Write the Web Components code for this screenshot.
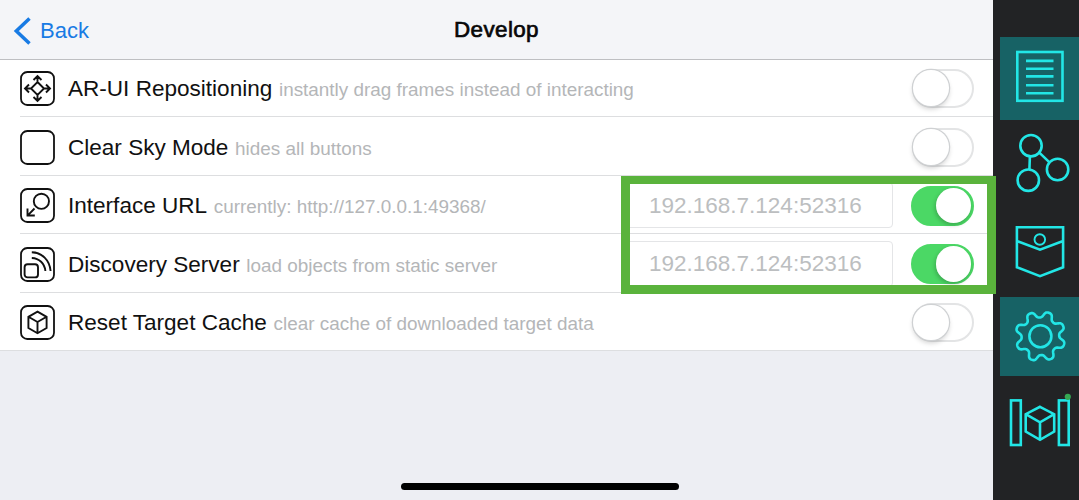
<!DOCTYPE html>
<html lang="en">
<head>
<meta charset="utf-8">
<title>Develop</title>
<style>
html, body { margin: 0; height: 100%; overflow: hidden; }
body { font-family: "Liberation Sans", Arial, sans-serif; }
</style>
</head>
<body>
<settings-app></settings-app>
<script>
const ICONS = {
  move: `<path d="M17.5 11L24 17.5L17.5 24L11 17.5ZM17.5 11V5M13.5 9L17.5 5L21.5 9M17.5 24V30M13.5 26L17.5 30L21.5 26M11 17.5H5M9 13.5L5 17.5L9 21.5M24 17.5H30M26 13.5L30 17.5L26 21.5"/>`,
  blank: ``,
  link: `<circle cx="21.4" cy="13.3" r="7.6"/><path d="M14.5 20.5L7.8 27.3M7.5 20.6V27.5H14.8"/>`,
  server: `<rect x="4.6" y="17.2" width="13.4" height="13.2" rx="3"/><path d="M11.8 5.3C22 5.6 29.6 13 30.6 24M11.8 11C19.3 11.3 24.6 16.5 25.4 24"/>`,
  cube: `<path d="M17.5 6.7L26.6 11.8V23L17.5 28.2L8.4 23V11.8ZM8.4 11.8L17.5 17L26.6 11.8M17.5 17V28.2"/>`
};

function gearPath(cx, cy) {
  const points = [];
  for (let i = 0; i < 240; i++) {
    const t = i / 240 * Math.PI * 2;
    const r = 21.9 + 3.1 * Math.tanh(1.5 * Math.cos(8 * (t + 0.435))) / Math.tanh(1.5);
    points.push((cx + r * Math.sin(t)).toFixed(2) + " " + (cy - r * Math.cos(t)).toFixed(2));
  }
  return "M" + points.join("L") + "Z";
}

const NAV = {
  page: ["1000 37 79 83", `<rect x="1017.3" y="52" width="45.2" height="48.8"/><path d="M1026 60.9H1053.5M1026 68.7H1053.5M1026 76.4H1053.5M1026 85.2H1053.5M1026 93.3H1053.5"/>`],
  nodes: ["1000 124 79 82", `<circle cx="1031" cy="145.7" r="10.7"/><circle cx="1028.3" cy="180.2" r="10.7"/><circle cx="1057.6" cy="169.5" r="10.7"/><path d="M1029.9 156.4L1029.4 169.5M1039.3 152.6L1049.5 162.4"/>`],
  pocket: ["1000 210 79 83", `<path d="M1016.9 227.2H1063.1V267.3L1040 276.2L1016.9 267.3ZM1016.9 241L1040 249.6L1063.1 241"/><circle cx="1039.8" cy="239.5" r="5.3" stroke-width="1.9"/>`],
  gear: ["1000 297 79 79", `<path d="${gearPath(1040.4, 336.3)}"/><circle cx="1040.4" cy="336.2" r="11"/>`],
  world: ["1000 380 79 83", `<rect x="1011" y="400.4" width="9.8" height="44.6"/><rect x="1058.9" y="400.4" width="9.8" height="44.6"/><path d="M1040 406.8L1054.2 414.2V431.5L1040 439.8L1025.7 431.5V414.2ZM1025.7 414.2L1040 422.3L1054.2 414.2M1040 422.3V439.8"/><circle cx="1067.8" cy="396.8" r="3.1" fill="#35a853" stroke="none"/>`]
};

class BaseElement extends HTMLElement {
  connectedCallback() {
    if (!this.shadowRoot) this.attachShadow({ mode: "open" }).innerHTML = this.render();
  }
}

customElements.define("row-icon", class extends BaseElement {
  render() {
    return `<style>:host{display:block;width:35px;height:35px}svg{display:block}</style>
    <svg width="35" height="35" viewBox="0 0 35 35" fill="none" stroke="#111" stroke-width="1.9">
      <rect x="1" y="1" width="33" height="33" rx="6.3" stroke-width="1.8"/>${ICONS[this.getAttribute("name")]}</svg>`;
  }
});

customElements.define("toggle-switch", class extends BaseElement {
  render() {
    return `<style>
      :host{display:flex;align-items:center;box-sizing:border-box;width:62px;height:39px;border-radius:20px;border:2px solid #e3e4e5;background:#fff;flex:none}
      i{width:35.5px;height:35.5px;margin-left:-1px;border-radius:50%;background:#fff;box-shadow:0 0 0 1.2px #cfd1d3,0 3px 5px rgba(0,0,0,.18)}
      :host([on]){width:63px;height:40px;margin-left:-1px;background:#4bd865;border-color:#4bd865}
      :host([on]) i{margin-left:22.5px;width:35.5px;height:35.5px;box-shadow:-1px 2px 4px rgba(0,0,0,.22)}
    </style><i></i>`;
  }
});

customElements.define("address-field", class extends BaseElement {
  render() {
    return `<style>:host{display:flex;align-items:center;box-sizing:border-box;width:267px;height:46px;padding:1px 0 0 22px;margin:-1px 19px 0 0;border:1px solid #e4e5e7;border-radius:4px;background:#fff;color:#bcbec0;font-size:22.5px;white-space:nowrap;flex:none}</style><slot></slot>`;
  }
});

customElements.define("setting-row", class extends BaseElement {
  render() {
    return `<style>
      :host{display:flex;align-items:center;box-sizing:border-box;margin-left:20px;padding:2px 19px 0 0;border-bottom:1px solid #dddee0;min-width:0}
      :host(:first-of-type){padding-top:0}
      :host(:last-of-type){margin-left:0;padding-left:20px}
      .text{flex:1;display:flex;align-items:baseline;gap:6.7px;margin-left:13px;padding-top:2px;white-space:nowrap;line-height:26px}
      .title{font-size:22.55px;color:#111}
      .sub{font-size:18.9px;color:#b4b6b8}
    </style>
    <row-icon name="${this.getAttribute("icon")}"></row-icon>
    <div class="text"><span class="title"><slot></slot></span><span class="sub"><slot name="sub"></slot></span></div>
    <slot name="control"></slot>`;
  }
});

customElements.define("nav-header", class extends BaseElement {
  render() {
    return `<style>
      :host{display:grid;grid-template-columns:1fr auto 1fr;align-items:center;box-sizing:border-box;height:60px;padding:0 13px 0 13px;border-bottom:1px solid #bebfc2;background:#f4f5f8}
      .back{display:flex;align-items:center;gap:9px;color:#187be4;font-size:22px;padding-top:2px}
      svg{display:block}
      h1{margin:0;padding-top:1px;font-size:22.4px;font-weight:400;letter-spacing:.4px;-webkit-text-stroke:.7px #080808;color:#080808}
    </style>
    <div class="back"><svg width="18" height="28" viewBox="0 0 18 28" fill="none" stroke="#187be4" stroke-width="3.5"><path d="M16.5 1.5L3.3 14L16.5 26.5"/></svg><span>Back</span></div>
    <h1><slot></slot></h1><span></span>`;
  }
});

customElements.define("nav-tile", class extends BaseElement {
  render() {
    const [box, shape] = NAV[this.getAttribute("name")];
    return `<style>:host{display:block;min-height:0}:host([active]){background:#176265}svg{display:block;width:100%;height:100%}</style>
    <svg viewBox="${box}" fill="none" stroke="#22e6e6" stroke-width="2.6">${shape}</svg>`;
  }
});

customElements.define("side-bar", class extends BaseElement {
  render() {
    return `<style>:host{display:grid;box-sizing:border-box;grid-template-rows:83px 82px 83px 79px 83px;row-gap:4px;align-content:start;padding:37px 0 0 7px;background:#222325}</style>
    <nav-tile name="page" active></nav-tile><nav-tile name="nodes"></nav-tile><nav-tile name="pocket"></nav-tile><nav-tile name="gear" active></nav-tile><nav-tile name="world"></nav-tile>`;
  }
});

customElements.define("settings-app", class extends BaseElement {
  render() {
    return `<style>
      :host{position:relative;display:grid;grid-template-columns:993px 86px;width:1079px;height:500px;overflow:hidden}
      main{display:flex;flex-direction:column;background:#edeef3;min-width:0}
      .rows{display:grid;grid-template-rows:57px 59px 58px 59px 58px;background:#fff}
      .home{width:278px;height:7px;border-radius:4px;background:#000;margin:auto 0 10px 401px}
      .highlight{position:absolute;left:621px;top:176px;width:375px;height:118px;box-sizing:border-box;border:9px solid #5ab33c;border-top-width:8.5px}
    </style>
    <main>
      <nav-header>Develop</nav-header>
      <div class="rows">
        <setting-row icon="move">AR-UI Repositioning<span slot="sub">instantly drag frames instead of interacting</span><toggle-switch slot="control"></toggle-switch></setting-row>
        <setting-row icon="blank">Clear Sky Mode<span slot="sub">hides all buttons</span><toggle-switch slot="control"></toggle-switch></setting-row>
        <setting-row icon="link">Interface URL<span slot="sub">currently: http://127.0.0.1:49368/</span><address-field slot="control">192.168.7.124:52316</address-field><toggle-switch slot="control" on></toggle-switch></setting-row>
        <setting-row icon="server">Discovery Server<span slot="sub">load objects from static server</span><address-field slot="control">192.168.7.124:52316</address-field><toggle-switch slot="control" on></toggle-switch></setting-row>
        <setting-row icon="cube">Reset Target Cache<span slot="sub">clear cache of downloaded target data</span><toggle-switch slot="control"></toggle-switch></setting-row>
      </div>
      <div class="home"></div>
    </main>
    <side-bar></side-bar>
    <div class="highlight"></div>`;
  }
});
</script>
</body>
</html>
